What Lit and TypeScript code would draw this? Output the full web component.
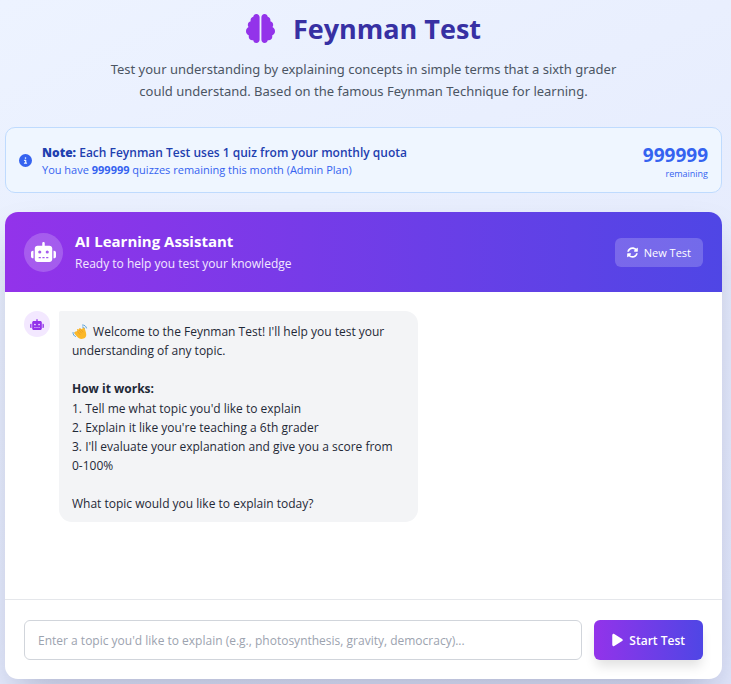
import { LitElement, html, css, svg } from "lit";
import { customElement, property } from "lit/decorators.js";

const icons: Record<string, { box: string; path: string }> = {
  brain: {
    box: "0 0 512 512",
    path: "M184 0c30.9 0 56 25.1 56 56l0 400c0 30.9-25.1 56-56 56c-28.9 0-52.7-21.9-55.7-50.1c-5.2 1.4-10.7 2.1-16.3 2.1c-35.3 0-64-28.7-64-64c0-7.4 1.3-14.6 3.6-21.2C21.4 367.4 0 338.2 0 304c0-31.9 18.7-59.5 45.8-72.3C37.1 220.8 32 207 32 192c0-30.7 21.6-56.3 50.4-62.6C80.8 123.9 80 118 80 112c0-29.9 20.6-55.1 48.3-62.1C131.3 21.9 155.1 0 184 0zM328 0c28.9 0 52.6 21.9 55.7 49.9c27.8 7 48.3 32.1 48.3 62.1c0 6-.8 11.9-2.4 17.4c28.8 6.2 50.4 31.9 50.4 62.6c0 15-5.1 28.8-13.8 39.7C493.3 244.5 512 272.1 512 304c0 34.2-21.4 63.4-51.6 74.8c2.3 6.6 3.6 13.8 3.6 21.2c0 35.3-28.7 64-64 64c-5.6 0-11.1-.7-16.3-2.1c-3 28.2-26.8 50.1-55.7 50.1c-30.9 0-56-25.1-56-56l0-400c0-30.9 25.1-56 56-56z",
  },
  info: {
    box: "0 0 512 512",
    path: "M256 512A256 256 0 1 0 256 0a256 256 0 1 0 0 512zM216 336l24 0 0-64-24 0c-13.3 0-24-10.7-24-24s10.7-24 24-24l48 0c13.3 0 24 10.7 24 24l0 88 8 0c13.3 0 24 10.7 24 24s-10.7 24-24 24l-80 0c-13.3 0-24-10.7-24-24s10.7-24 24-24zm40-208a32 32 0 1 1 0 64 32 32 0 1 1 0-64z",
  },
  robot: {
    box: "0 0 640 512",
    path: "M320 0c17.7 0 32 14.3 32 32l0 64 120 0c39.8 0 72 32.2 72 72l0 272c0 39.8-32.2 72-72 72l-304 0c-39.8 0-72-32.2-72-72l0-272c0-39.8 32.2-72 72-72l120 0 0-64c0-17.7 14.3-32 32-32zM208 384c-8.8 0-16 7.2-16 16s7.2 16 16 16l32 0c8.8 0 16-7.2 16-16s-7.2-16-16-16l-32 0zm96 0c-8.8 0-16 7.2-16 16s7.2 16 16 16l32 0c8.8 0 16-7.2 16-16s-7.2-16-16-16l-32 0zm96 0c-8.8 0-16 7.2-16 16s7.2 16 16 16l32 0c8.8 0 16-7.2 16-16s-7.2-16-16-16l-32 0zM264 256a40 40 0 1 0 -80 0 40 40 0 1 0 80 0zm152 40a40 40 0 1 0 0-80 40 40 0 1 0 0 80zM48 224l16 0 0 192-16 0c-26.5 0-48-21.5-48-48l0-96c0-26.5 21.5-48 48-48zm544 0c26.5 0 48 21.5 48 48l0 96c0 26.5-21.5 48-48 48l-16 0 0-192 16 0z",
  },
  rotate: {
    box: "0 0 512 512",
    path: "M370.72 133.28C339.458 104.008 298.888 87.962 255.848 88c-77.458.068-144.328 53.178-162.791 126.85-1.344 5.363-6.122 9.15-11.651 9.15H24.103c-7.498 0-13.194-6.807-11.807-14.176C33.933 94.924 134.813 8 256 8c66.448 0 126.791 26.136 171.315 68.685L463.03 40.97C478.149 25.851 504 36.559 504 57.941V192c0 13.255-10.745 24-24 24H345.941c-21.382 0-32.09-25.851-16.971-40.971l41.75-41.749zM32 296h134.059c21.382 0 32.09 25.851 16.971 40.971l-41.75 41.75c31.262 29.273 71.835 45.319 114.876 45.28 77.418-.07 144.315-53.144 162.787-126.849 1.344-5.363 6.122-9.15 11.651-9.15h57.304c7.498 0 13.194 6.807 11.807 14.176C478.067 417.076 377.187 504 256 504c-66.448 0-126.791-26.136-171.315-68.685L48.97 471.03C33.851 486.149 8 475.441 8 454.059V320c0-13.255 10.745-24 24-24z",
  },
  play: {
    box: "0 0 384 512",
    path: "M73 39c-14.8-9.1-33.4-9.4-48.5-.9S0 62.6 0 80L0 432c0 17.4 9.4 33.4 24.5 41.9s33.7 8.1 48.5-.9L361 297c14.3-8.7 23-24.2 23-41s-8.7-32.2-23-41L73 39z",
  },
};

@customElement("ft-icon")
class FtIcon extends LitElement {
  @property() name = "info";

  static styles = css`
    :host {
      display: block;
      flex: none;
    }
    .glyph {
      display: block;
      width: 100%;
      height: 100%;
      fill: currentColor;
    }
  `;

  render() {
    const icon = icons[this.name];
    return html`<svg class="glyph" viewBox=${icon.box} aria-hidden="true">
      ${svg`<path d=${icon.path}></path>`}
    </svg>`;
  }
}

@customElement("app-root")
class AppRoot extends LitElement {
  static styles = css`
    :host {
      display: block;
      box-sizing: border-box;
      min-height: 100vh;
      padding: 9px 9px 5px 5px;
      background: linear-gradient(155deg, #edf3ff, #e1e7fc);
      color: #1f2937;
      font-family: "Segoe UI", "Open Sans", "Noto Sans", sans-serif;
      font-size: 12px;
      line-height: 19px;
    }
    * {
      box-sizing: border-box;
    }
    h1,
    h2,
    p {
      margin: 0;
    }
    button,
    input {
      font: inherit;
    }
    .intro {
      text-align: center;
    }
    .title {
      display: flex;
      justify-content: center;
      align-items: center;
      gap: 18px;
      color: #3730a3;
      font-size: 27px;
      line-height: 39px;
      font-weight: 700;
    }
    .brain {
      width: 29px;
      height: 29px;
      color: #9333ea;
    }
    .lead {
      max-width: 530px;
      margin: 10px auto 0;
      color: #4b5563;
      font-family: "Segoe UI", "Noto Sans", sans-serif;
      font-size: 13px;
      line-height: 22px;
    }
    .quota {
      display: flex;
      align-items: center;
      gap: 10px;
      margin-top: 25px;
      padding: 12px 13px;
      min-height: 66px;
      border: 1px solid #bfdbfe;
      border-radius: 10px;
      background: #eff6ff;
      color: #3563f0;
    }
    .info {
      width: 13px;
      height: 13px;
    }
    .quota-text {
      flex: 1;
      font-size: 11px;
      line-height: 16px;
    }
    .quota-note {
      color: #1e40af;
      font-size: 12px;
      line-height: 19px;
      font-weight: 600;
    }
    .quota-left {
      text-align: right;
      font-size: 9px;
      line-height: 11px;
    }
    .quota-count {
      font-size: 19px;
      line-height: 26px;
      font-weight: 700;
    }
    .card {
      margin-top: 19px;
      border-radius: 13px;
      overflow: hidden;
      background: #ffffff;
      box-shadow: 0 20px 40px -10px rgba(30, 27, 75, 0.28);
    }
    .card-head {
      display: flex;
      align-items: center;
      gap: 12px;
      min-height: 80px;
      padding: 18px 19px;
      background: linear-gradient(90deg, #9333ea, #4f46e5);
      color: #ffffff;
    }
    .badge {
      display: grid;
      place-items: center;
      width: 39px;
      height: 39px;
      border-radius: 50%;
      background: rgba(255, 255, 255, 0.2);
    }
    .badge-icon {
      width: 25px;
      height: 20px;
    }
    .names {
      flex: 1;
      color: #f3e8ff;
      line-height: 21px;
    }
    .name {
      color: #ffffff;
      font-size: 15px;
      line-height: 23px;
      font-weight: 700;
    }
    .new-test {
      display: flex;
      align-items: center;
      gap: 6px;
      height: 29px;
      padding: 0 12px;
      border: 0;
      border-radius: 6px;
      background: rgba(255, 255, 255, 0.2);
      color: #ffffff;
      font-size: 11px;
    }
    .rotate {
      width: 11px;
      height: 11px;
    }
    .chat {
      min-height: 307px;
      padding: 19px;
    }
    .message {
      display: flex;
      align-items: flex-start;
      gap: 9px;
      width: 58%;
      min-width: 320px;
    }
    .avatar {
      display: grid;
      flex: none;
      place-items: center;
      width: 26px;
      height: 26px;
      border-radius: 50%;
      background: #f3e8ff;
      color: #9333ea;
    }
    .avatar-icon {
      width: 14px;
      height: 11px;
    }
    .bubble {
      flex: 1;
      padding: 11px 13px 9px;
      border-radius: 2px 13px 13px 13px;
      background: #f3f4f6;
    }
    .bubble-part + .bubble-part {
      margin-top: 19px;
    }
    .bubble-title {
      display: block;
      line-height: 20px;
    }
    .wave {
      width: 16px;
      height: 15px;
      margin-right: 2px;
      vertical-align: -3px;
    }
    .keep {
      white-space: nowrap;
    }
    .composer {
      display: flex;
      gap: 12px;
      padding: 20px 19px 19px;
      border-top: 1px solid #e5e7eb;
    }
    .topic {
      flex: 1;
      min-width: 0;
      height: 40px;
      padding: 0 13px;
      border: 1px solid #d1d5db;
      border-radius: 6px;
      background: #ffffff;
      color: #1f2937;
    }
    .topic::placeholder {
      color: #9ca3af;
      opacity: 1;
    }
    .start {
      display: flex;
      align-items: center;
      justify-content: center;
      gap: 6px;
      height: 40px;
      padding: 0 18px;
      border: 0;
      border-radius: 6px;
      background: linear-gradient(90deg, #9333ea, #4f46e5);
      box-shadow: 0 8px 12px -2px rgba(0, 0, 0, 0.12);
      color: #ffffff;
      font-weight: 600;
    }
    .play {
      width: 11px;
      height: 14px;
    }
  `;

  render() {
    return html`
      <header class="intro">
        <h1 class="title"><ft-icon class="brain" name="brain"></ft-icon>Feynman Test</h1>
        <p class="lead">
          Test your understanding by explaining concepts in simple terms that a sixth grader could
          understand. Based on the famous Feynman Technique for learning.
        </p>
      </header>

      <section class="quota">
        <ft-icon class="info" name="info"></ft-icon>
        <div class="quota-text">
          <p class="quota-note">
            <strong>Note:</strong> Each Feynman Test uses 1 quiz from your monthly quota
          </p>
          <p>You have <strong>999999</strong> quizzes remaining this month (Admin Plan)</p>
        </div>
        <div class="quota-left">
          <p class="quota-count">999999</p>
          <p>remaining</p>
        </div>
      </section>

      <main class="card">
        <div class="card-head">
          <div class="badge"><ft-icon class="badge-icon" name="robot"></ft-icon></div>
          <div class="names">
            <h2 class="name">AI Learning Assistant</h2>
            <p>Ready to help you test your knowledge</p>
          </div>
          <button class="new-test" type="button">
            <ft-icon class="rotate" name="rotate"></ft-icon>New Test
          </button>
        </div>

        <div class="chat">
          <div class="message">
            <div class="avatar"><ft-icon class="avatar-icon" name="robot"></ft-icon></div>
            <div class="bubble">
              <p class="bubble-part">
                <svg class="wave" viewBox="0 0 32 30" role="img" aria-label="Waving hand">
                  <g fill="none" stroke="#5ba3dc" stroke-width="2" stroke-linecap="round">
                    <path d="M2 17c0 4 2 7 5 8M6 17c0 2 1 4 3 5M21 2c4 0 7 2 8 6M21 6c2 0 4 1 4 3" />
                  </g>
                  <path
                    d="M8 15c1-1 2-1 3 0l-1-3c0-2 2-3 3-1l1 1c-1-3 1-4 3-3l3 2c1-3 2-4 4-3 2 1 2 3 3 6 2 6 3 13-4 15-5 2-10 0-13-4l-5-6c-1-2 1-4 3-4z"
                    fill="#fbb829"
                  />
                  <path
                    d="M11 15l5 6M14 12l5 6M17 10l5 6"
                    fill="none"
                    stroke="#e08a1e"
                    stroke-width="1"
                    stroke-linecap="round"
                  />
                </svg>
                Welcome to the Feynman Test! I'll help you test your understanding of any topic.
              </p>
              <p class="bubble-part">
                <strong class="bubble-title">How it works:</strong>
                1. Tell me what topic you'd like to explain<br />
                2. Explain it like you're teaching a 6th grader<br />
                3. I'll evaluate your explanation and give you a score from
                <span class="keep">0-100%</span>
              </p>
              <p class="bubble-part">What topic would you like to explain today?</p>
            </div>
          </div>
        </div>

        <form class="composer" @submit=${(e: Event) => e.preventDefault()}>
          <input
            class="topic"
            type="text"
            aria-label="Topic to explain"
            placeholder="Enter a topic you'd like to explain (e.g., photosynthesis, gravity, democracy)..."
          />
          <button class="start" type="submit">
            <ft-icon class="play" name="play"></ft-icon>Start Test
          </button>
        </form>
      </main>
    `;
  }
}
